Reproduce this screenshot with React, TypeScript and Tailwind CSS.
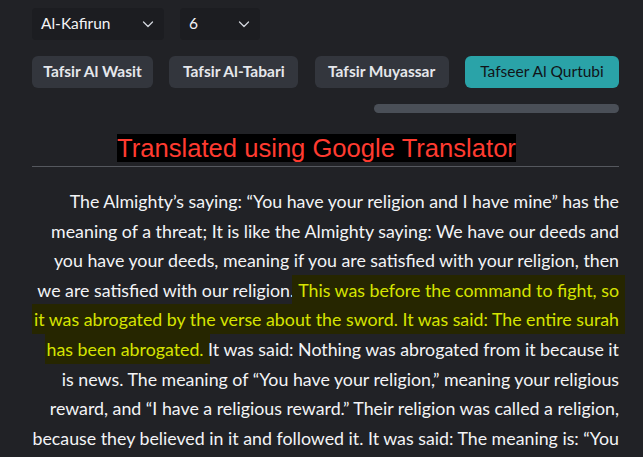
import React from 'react';

const ChevronDown = () => (
  <svg width="12" height="12" viewBox="0 0 12 12" fill="none" className="text-gray-300">
    <path d="M1.5 4 6 8.5 10.5 4" stroke="currentColor" strokeWidth="1.3" strokeLinecap="round" strokeLinejoin="round" />
  </svg>
);

const Select: React.FC<{ value: string; width: string }> = ({ value, width }) => (
  <div className={`flex items-center justify-between h-8 pl-[9px] pr-[10px] bg-[#1c1d21] rounded ${width}`}>
    <span className="text-[15.5px] text-gray-100">{value}</span>
    <ChevronDown />
  </div>
);

const tafsirs = [
  { name: 'Tafsir Al Wasit', w: 'w-[121px]' },
  { name: 'Tafsir Al-Tabari', w: 'w-[129px]' },
  { name: 'Tafsir Muyassar', w: 'w-[134px]' },
  { name: 'Tafseer Al Qurtubi', w: 'w-[154px]' },
];

export default function App() {
  return (
    <div
      className="w-[643px] h-[457px] overflow-hidden bg-[#212226] pl-8 pr-6 pt-2 text-gray-100"
      style={{ fontFamily: 'Lato, "Open Sans", sans-serif' }}
    >
      <div className="flex gap-4">
        <Select value="Al-Kafirun" width="w-[132px]" />
        <Select value="6" width="w-[80px]" />
      </div>

      <div className="flex justify-between mt-4">
        {tafsirs.map((t, i) => (
          <button
            key={t.name}
            className={
              i === 3
                ? `h-8 ${t.w} rounded-md bg-[#2aa3a8] text-[#111418] text-[15.5px]`
                : `h-8 ${t.w} rounded-md bg-[#33363d] text-gray-200 text-[15.5px] font-bold`
            }
          >
            {t.name}
          </button>
        ))}
      </div>

      <div className="flex justify-end mt-4">
        <div className="w-[245px] h-[9px] rounded-full bg-[#4a4f57]" />
      </div>

      <h2 className="mt-5 text-center border-b border-[#55585e] leading-[30px]">
        <span
          className="bg-black text-[#ff3b30] text-[25.6px] mr-[18px]"
          style={{ fontFamily: '"Liberation Sans", Arial, sans-serif' }}
        >
          Translated using Google Translator
        </span>
      </h2>

      <p className="mt-5 text-right text-[17.8px] leading-[29.6px] text-gray-100">
        The Almighty’s saying: “You have your religion and I have mine” has the
        <br />
        meaning of a threat; It is like the Almighty saying: We have our deeds and
        <br />
        you have your deeds, meaning if you are satisfied with your religion, then
        <br />
        we are satisfied with our religion.
        <span className="bg-[#262600] text-[#d6e400] box-decoration-clone shadow-[6px_4px_0_#262600,6px_-4px_0_#262600,-2px_4px_0_#262600,-2px_-4px_0_#262600]">
          {' '}This was before the command to fight, so
          <br />
          it was abrogated by the verse about the sword. It was said: The entire surah
          <br />
          has been abrogated.
        </span>{' '}
        It was said: Nothing was abrogated from it because it
        <br />
        is news. The meaning of “You have your religion,” meaning your religious
        <br />
        reward, and “I have a religious reward.” Their religion was called a religion,
        <br />
        because they believed in it and followed it. It was said: The meaning is: “You
      </p>
    </div>
  );
}
